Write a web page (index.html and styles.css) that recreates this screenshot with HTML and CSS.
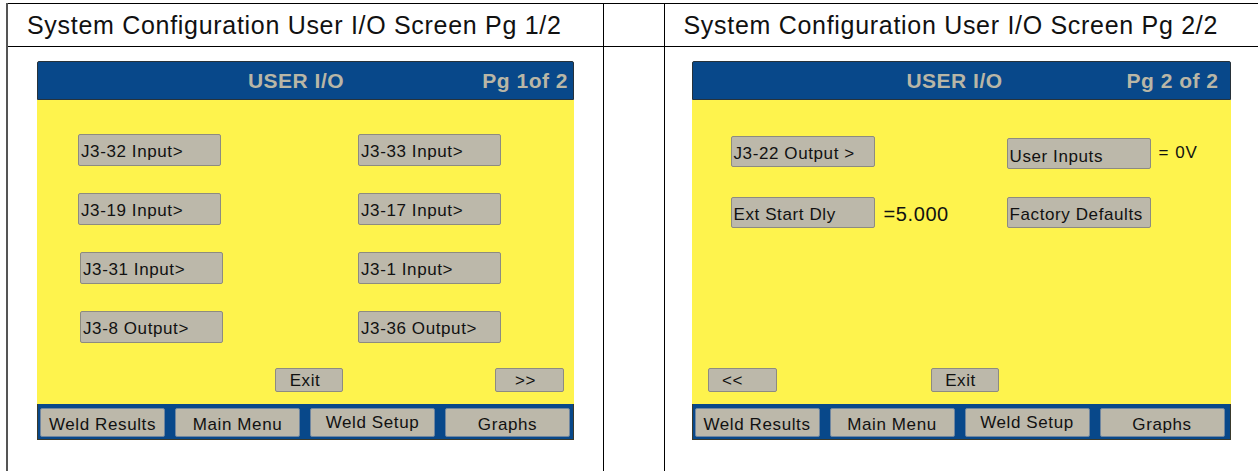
FILE: index.html
```html
<!DOCTYPE html>
<html>
<head>
  <meta charset="utf-8">
  <title>System Configuration User I/O</title>
  <link rel="stylesheet" href="styles.css">
</head>
<body>
  <table class="sheet">
    <colgroup>
      <col class="col-shot">
      <col class="col-gap">
      <col class="col-shot2">
    </colgroup>
    <tr class="titles">
      <td class="first">System Configuration User I/O Screen Pg 1/2</td>
      <td></td>
      <td class="last">System Configuration User I/O Screen Pg 2/2</td>
    </tr>
    <tr class="shots">
      <td class="first">
        <!-- page 1 of the user i/o screen -->
        <div class="screen screen-one">
          <div class="screen-head">
            <span class="screen-title">USER I/O</span>
            <span class="screen-page">Pg 1of 2</span>
          </div>
          <div class="screen-body">
            <div class="io-list">
              <div class="io-row">
                <div class="key">J3-32 Input&gt;</div>
                <div class="key key-right">J3-33 Input&gt;</div>
              </div>
              <div class="io-row">
                <div class="key">J3-19 Input&gt;</div>
                <div class="key key-right">J3-17 Input&gt;</div>
              </div>
              <div class="io-row">
                <div class="key key-nudge">J3-31 Input&gt;</div>
                <div class="key key-right">J3-1 Input&gt;</div>
              </div>
              <div class="io-row">
                <div class="key key-nudge">J3-8 Output&gt;</div>
                <div class="key key-right">J3-36 Output&gt;</div>
              </div>
            </div>
            <div class="foot">
              <div class="small-key exit-one">Exit</div>
              <div class="small-key next">&gt;&gt;</div>
            </div>
          </div>
          <div class="nav">
            <div class="nav-key">Weld Results</div>
            <div class="nav-key">Main Menu</div>
            <div class="nav-key nav-up">Weld Setup</div>
            <div class="nav-key">Graphs</div>
          </div>
        </div>
      </td>
      <td></td>
      <td class="last">
        <!-- page 2 -->
        <div class="screen screen-two">
          <div class="screen-head">
            <span class="screen-title">USER I/O</span>
            <span class="screen-page">Pg 2 of 2</span>
          </div>
          <div class="screen-body">
            <div class="io-grid">
              <div class="key">J3-22 Output &gt;</div>
              <div></div>
              <div class="key key-low">User Inputs</div>
              <div class="reading">= 0V</div>
              <div class="key">Ext Start Dly</div>
              <div class="reading reading-big">=5.000</div>
              <div class="key">Factory Defaults</div>
              <div></div>
            </div>
            <div class="foot foot-two">
              <div class="small-key prev">&lt;&lt;</div>
              <div class="small-key exit-two">Exit</div>
            </div>
          </div>
          <div class="nav">
            <div class="nav-key">Weld Results</div>
            <div class="nav-key">Main Menu</div>
            <div class="nav-key nav-up">Weld Setup</div>
            <div class="nav-key">Graphs</div>
          </div>
        </div>
      </td>
    </tr>
  </table>
</body>
</html>
```

FILE: styles.css
```css
html, body {
  margin: 0;
  overflow: hidden;
  background: #fff;
}

body {
  font-family: "Liberation Sans", Arial, sans-serif;
  color: #111;
}

.sheet {
  border-collapse: collapse;
  table-layout: fixed;
  width: 1253px;
  margin: 3px 0 0 6px;
}

.col-shot { width: 596px; }
.col-gap { width: 61px; }
.col-shot2 { width: 596px; }

.sheet td {
  border: 1px solid #000;
  padding: 0;
  vertical-align: top;
}

.sheet td.first {
  border-left: 2px solid #555;
}

.sheet td.last {
  border-right: 0;
}

.titles td {
  height: 41px;
  vertical-align: middle;
  padding: 1px 0 0 19px;
  font-size: 25px;
  letter-spacing: 0.7px;
  white-space: nowrap;
}

.shots td {
  height: 440px;
}

/* screens */
.screen {
  width: 537px;
  margin: 14px 0 0 29px;
}

.screen-two {
  width: 539px;
  margin-left: 27px;
}

.screen-head {
  box-sizing: border-box;
  height: 39px;
  background: #08488a;
  border: 1px solid #27323a;
  border-radius: 2px 2px 0 0;
  display: grid;
  grid-template-columns: 1fr auto 1fr;
  align-items: center;
  padding: 1px 5px 0 0;
  color: #b9b6a6;
  font-weight: bold;
  font-size: 21px;
  letter-spacing: 0.5px;
}

.screen-two .screen-head {
  padding-right: 11px;
}

.screen-title {
  grid-column: 2;
  margin-right: 14px;
}

.screen-two .screen-title {
  margin-right: 2px;
}

.screen-page {
  justify-self: end;
}

.screen-body {
  box-sizing: border-box;
  height: 304px;
  background: #fef34d;
  padding: 34px 0 12px;
  display: flex;
  flex-direction: column;
}

.screen-two .screen-body {
  padding-top: 36px;
}

.io-list {
  margin-left: 41px;
  display: flex;
  flex-direction: column;
  gap: 27px;
}

.io-row {
  display: flex;
}

.key {
  box-sizing: border-box;
  width: 143px;
  height: 32px;
  background: #bcb8aa;
  border: 1px solid #8d8b80;
  border-radius: 2px;
  padding: 7px 0 0 2px;
  line-height: 20px;
  font-size: 17px;
  letter-spacing: 0.6px;
  white-space: nowrap;
}

.key-right {
  margin-left: 137px;
}

.key-nudge {
  margin-left: 2px;
  margin-right: -2px;
}

.io-grid {
  margin-left: 39px;
  display: grid;
  grid-template-columns: 144px 132px 144px auto;
  grid-auto-rows: 31px;
  row-gap: 30px;
}

.io-grid .key {
  width: 144px;
  height: 31px;
}

.key-low {
  margin-top: 2px;
  padding-top: 8px;
}

.reading {
  padding-left: 8px;
  font-size: 17px;
  letter-spacing: 1px;
  line-height: 34px;
}

.reading-big {
  padding-left: 9px;
  font-size: 20px;
  letter-spacing: 0.6px;
  line-height: 34px;
}

.foot {
  margin-top: auto;
  display: flex;
}

.small-key {
  box-sizing: border-box;
  width: 68px;
  height: 24px;
  background: #bcb8aa;
  border: 1px solid #8d8b80;
  border-radius: 2px;
  padding-top: 1px;
  line-height: 21px;
  font-size: 17px;
  letter-spacing: 0.6px;
  text-align: center;
}

.exit-one {
  margin-left: 238px;
  padding-right: 8px;
}

.next {
  width: 69px;
  margin-left: 152px;
  padding-right: 8px;
}

.foot-two {
  padding-left: 16px;
}

.prev {
  width: 69px;
  padding-right: 19px;
}

.exit-two {
  margin-left: 154px;
  padding-right: 8px;
}

/* bottom navigation */
.nav {
  box-sizing: border-box;
  height: 36px;
  background: #08488a;
  border: 1px solid #3a3a2c;
  border-top: 0;
  padding: 4px 0 0 2px;
  display: flex;
  gap: 10px;
}

.nav-key {
  box-sizing: border-box;
  width: 125px;
  height: 29px;
  background: #bcb8aa;
  border: 1px solid #6f86a0;
  border-radius: 2px;
  padding-top: 4px;
  line-height: 24px;
  font-size: 17px;
  letter-spacing: 0.6px;
  text-align: center;
}

.nav-up {
  padding-top: 2px;
}
```
